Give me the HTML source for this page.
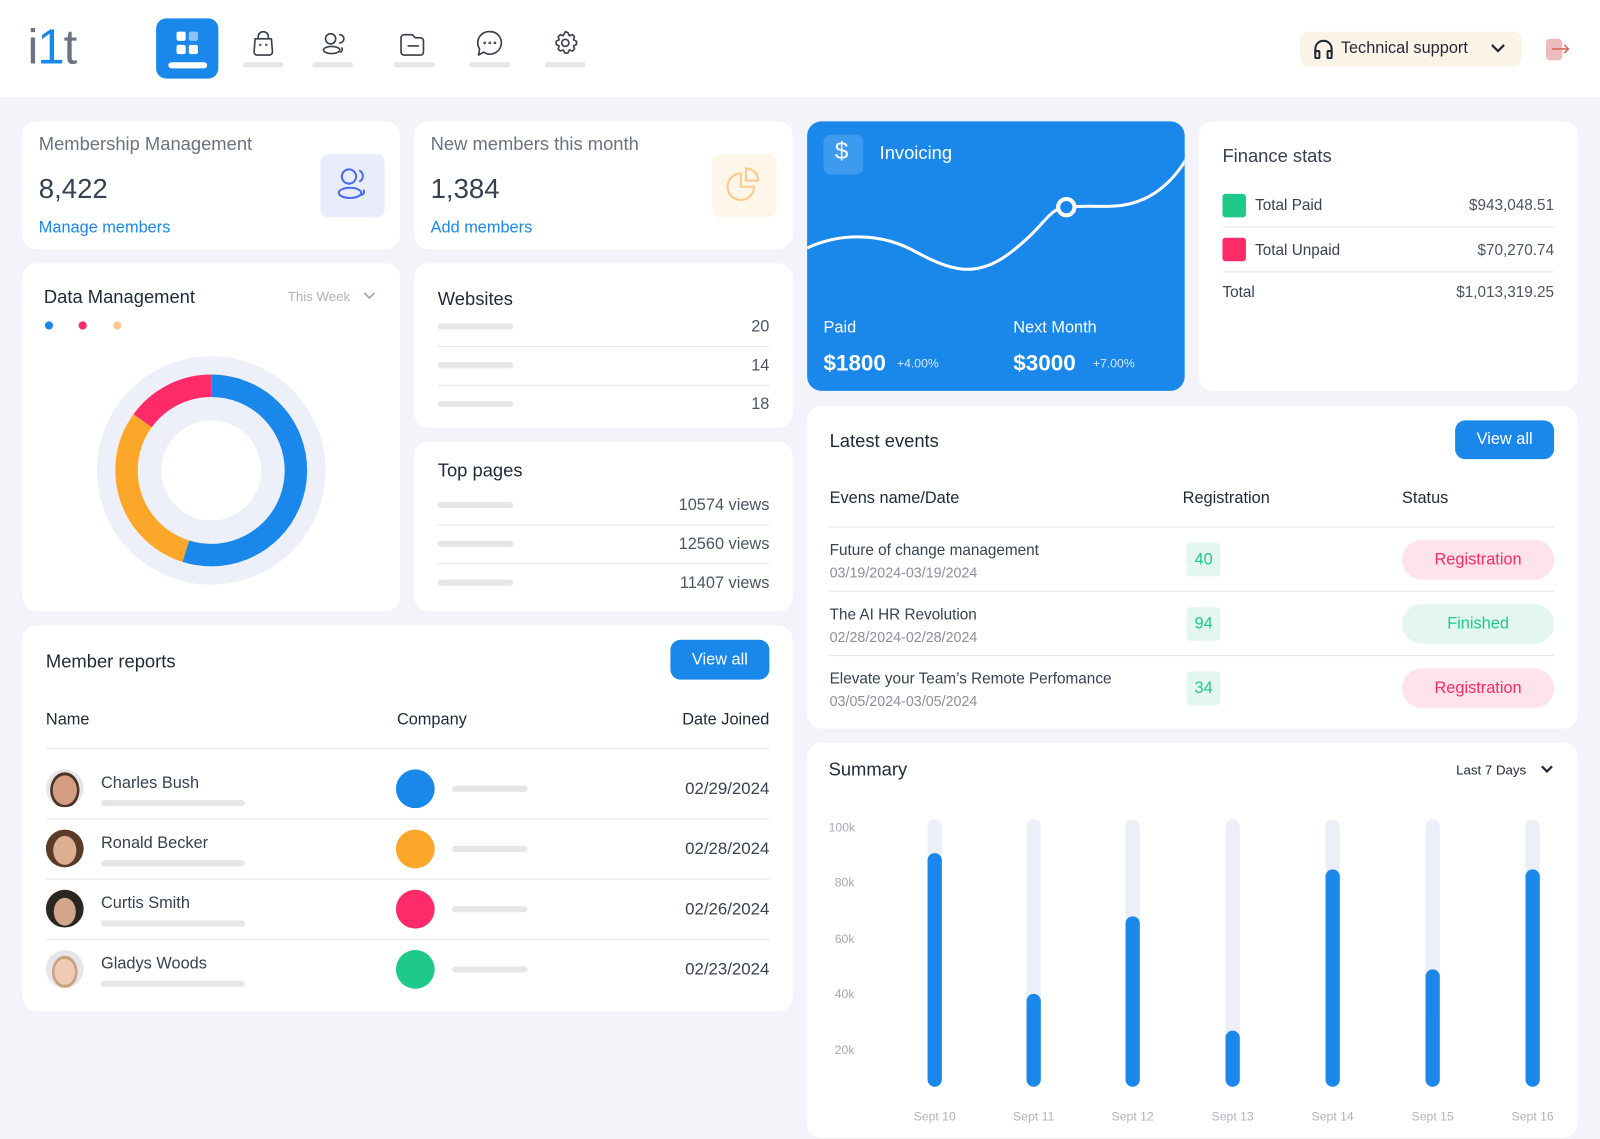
<!DOCTYPE html>
<html><head><meta charset="utf-8"><style>
*{box-sizing:border-box;margin:0;padding:0}
body{width:1600px;height:1138px;background:#f3f4f9;font-family:"Liberation Sans",sans-serif;color:#3a3f4a;position:relative;overflow:hidden}
#w{position:absolute;left:0;top:0;width:1568px;height:1116px;transform:scale(1.02041);transform-origin:0 0}
.a{position:absolute}
.card{position:absolute;background:#fff;border-radius:14px}
.t{position:absolute;white-space:nowrap}
.bar{position:absolute;height:6px;background:#e6e6e8;border-radius:3px}
.ln{position:absolute;height:1px;background:#e3e4ea}
.r{text-align:right}
</style></head><body><div id="w">
<!-- header -->
<div class="a" style="left:0;top:0;width:1568px;height:95px;background:#fff"></div>
<div class="t" style="left:27px;top:19px;font-size:48px;color:#6b7380;letter-spacing:-1px">i<span style="color:#1a87ea">1</span>t</div>
<div class="a" style="left:153px;top:18px;width:61px;height:59px;background:#1a87ea;border-radius:10px"></div>
<div class="a" style="left:173px;top:31px;width:9px;height:9px;background:#fff;border-radius:2px"></div>
<div class="a" style="left:185px;top:31px;width:9px;height:9px;background:#8ec3f5;border-radius:2px"></div>
<div class="a" style="left:173px;top:44px;width:9px;height:9px;background:#fff;border-radius:2px"></div>
<div class="a" style="left:185px;top:44px;width:9px;height:9px;background:#fff;border-radius:2px"></div>
<div class="a" style="left:165px;top:61px;width:38px;height:6px;background:#fff;border-radius:3px"></div>
<svg class="a" style="left:240px;top:28px" width="340" height="30" fill="none" stroke="#3a3f4a" stroke-width="1.6" stroke-linecap="round" stroke-linejoin="round">
<path d="M10 10h16l1 13a3 3 0 0 1-3 3H12a3 3 0 0 1-3-3z M13 10V8a5 5 0 0 1 10 0v2"/><circle cx="15" cy="16" r=".4"/><circle cx="21" cy="16" r=".4"/>
<circle cx="84" cy="10" r="5"/><ellipse cx="85" cy="21" rx="8" ry="3.5"/><path d="M93 6a4 4 0 0 1 0 8 M95 19a3 3 0 0 1-1 4"/>
<path d="M156 6h8l3 3h5a3 3 0 0 1 3 3v11a3 3 0 0 1-3 3h-16a3 3 0 0 1-3-3V9a3 3 0 0 1 3-3z M160 17h10"/>
<path d="M240 3a11 11 0 1 1-6 20l-5 3 1-6a11 11 0 0 1 10-17z"/><circle cx="235" cy="14" r=".5"/><circle cx="240" cy="14" r=".5"/><circle cx="245" cy="14" r=".5"/>
<circle cx="314" cy="14" r="3.5"/><path d="M314 3l2.5 1 1.5 3 3-1 2 2-1 3 3 1.5v3l-3 1.5 1 3-2 2-3-1-1.5 3h-3l-1.5-3-3 1-2-2 1-3-3-1.5v-3l3-1.5-1-3 2-2 3 1 1.5-3z"/>
</svg>
<div class="bar" style="left:238px;top:61px;width:40px;height:5px"></div>
<div class="bar" style="left:306px;top:61px;width:40px;height:5px"></div>
<div class="bar" style="left:386px;top:61px;width:40px;height:5px"></div>
<div class="bar" style="left:460px;top:61px;width:40px;height:5px"></div>
<div class="bar" style="left:534px;top:61px;width:40px;height:5px"></div>
<div class="a" style="left:1274px;top:31px;width:217px;height:34px;background:#fdf4e8;border-radius:8px"></div>
<svg class="a" style="left:1287px;top:38px" width="20" height="20" fill="none" stroke="#1f2937" stroke-width="2"><path d="M2 15V10a8 8 0 0 1 16 0v5"/><rect x="2" y="12" width="4" height="7" rx="1"/><rect x="14" y="12" width="4" height="7" rx="1"/></svg>
<div class="t" style="left:1314px;top:39px;font-size:16px;color:#1f2937">Technical support</div>
<svg class="a" style="left:1460px;top:41px" width="16" height="12" fill="none" stroke="#1f2937" stroke-width="2.2"><path d="M2 3l6 6 6-6"/></svg>
<div class="a" style="left:1515px;top:38px;width:16px;height:21px;background:#ecbcbd;border-radius:4px"></div>
<svg class="a" style="left:1520px;top:42px" width="20" height="12" fill="none" stroke="#d66a5b" stroke-width="1.6"><path d="M1 6h16M13 2l4 4-4 4"/></svg>

<!-- membership -->
<div class="card" style="left:22px;top:119px;width:370px;height:125px"></div>
<div class="t" style="left:38px;top:131px;font-size:18px;color:#6b7280">Membership Management</div>
<div class="t" style="left:38px;top:170px;font-size:27px;color:#374151">8,422</div>
<div class="t" style="left:38px;top:215px;font-size:16px;color:#1a87ea">Manage members</div>
<div class="a" style="left:314px;top:151px;width:63px;height:62px;background:#e8ecfd;border-radius:8px"></div>
<svg class="a" style="left:328px;top:163px" width="36" height="36" fill="none" stroke="#4a6ae8" stroke-width="2"><circle cx="14" cy="10" r="7"/><ellipse cx="15" cy="26" rx="11" ry="5"/><path d="M24 4a6 6 0 0 1 0 11 M28 23a3 3 0 0 1-2 5"/></svg>
<div class="card" style="left:406px;top:119px;width:371px;height:125px"></div>
<div class="t" style="left:422px;top:131px;font-size:18px;color:#6b7280">New members this month</div>
<div class="t" style="left:422px;top:170px;font-size:27px;color:#374151">1,384</div>
<div class="t" style="left:422px;top:215px;font-size:16px;color:#1a87ea">Add members</div>
<div class="a" style="left:698px;top:151px;width:63px;height:62px;background:#fff6ea;border-radius:8px"></div>
<svg class="a" style="left:710px;top:162px" width="40" height="40" fill="none" stroke="#fcc98a" stroke-width="2"><path d="M16 8a13 13 0 1 0 13 13H16z"/><path d="M21 3a12 12 0 0 1 12 12H21z"/></svg>

<!-- data management -->
<div class="card" style="left:22px;top:258px;width:370px;height:341px"></div>
<div class="t" style="left:43px;top:281px;font-size:18px;color:#1f2937">Data Management</div>
<div class="t" style="left:282px;top:283px;font-size:13px;color:#b0b3ba">This Week</div>
<svg class="a" style="left:356px;top:285px" width="12" height="10" fill="none" stroke="#9ca3af" stroke-width="1.6"><path d="M1 2l5 5 5-5"/></svg>
<div class="a" style="left:44px;top:315px;width:8px;height:8px;border-radius:50%;background:#1a87ea"></div>
<div class="a" style="left:77px;top:315px;width:8px;height:8px;border-radius:50%;background:#ff2a68"></div>
<div class="a" style="left:111px;top:315px;width:8px;height:8px;border-radius:50%;background:#fdc98b"></div>
<svg class="a" style="left:95px;top:349px" width="224" height="224">
<circle cx="112" cy="112" r="112" fill="#eef0f9"/><circle cx="112" cy="112" r="49" fill="#fff"/>
<g transform="rotate(-90 112 112)" fill="none" stroke-width="22">
<circle cx="112" cy="112" r="83" stroke="#1a87ea" stroke-dasharray="286 600"/>
<circle cx="112" cy="112" r="83" stroke="#fda72a" stroke-dasharray="0 286 157 600"/>
<circle cx="112" cy="112" r="83" stroke="#ff2a68" stroke-dasharray="0 443 79 600"/>
</g></svg>

<!-- websites -->
<div class="card" style="left:406px;top:258px;width:371px;height:161px"></div>
<div class="t" style="left:429px;top:283px;font-size:18px;color:#1f2937">Websites</div>
<div class="bar" style="left:429px;top:317px;width:74px"></div><div class="t r" style="left:654px;top:312px;width:100px;font-size:16px;color:#4b5563">20</div>
<div class="ln" style="left:429px;top:339px;width:325px"></div>
<div class="bar" style="left:429px;top:355px;width:74px"></div><div class="t r" style="left:654px;top:350px;width:100px;font-size:16px;color:#4b5563">14</div>
<div class="ln" style="left:429px;top:377px;width:325px"></div>
<div class="bar" style="left:429px;top:393px;width:74px"></div><div class="t r" style="left:654px;top:388px;width:100px;font-size:16px;color:#4b5563">18</div>

<!-- top pages -->
<div class="card" style="left:406px;top:433px;width:371px;height:166px"></div>
<div class="t" style="left:429px;top:451px;font-size:18px;color:#1f2937">Top pages</div>
<div class="bar" style="left:429px;top:492px;width:74px"></div><div class="t r" style="left:604px;top:487px;width:150px;font-size:16px;color:#4b5563">10574 views</div>
<div class="ln" style="left:429px;top:514px;width:325px"></div>
<div class="bar" style="left:429px;top:530px;width:74px"></div><div class="t r" style="left:604px;top:525px;width:150px;font-size:16px;color:#4b5563">12560 views</div>
<div class="ln" style="left:429px;top:552px;width:325px"></div>
<div class="bar" style="left:429px;top:568px;width:74px"></div><div class="t r" style="left:604px;top:563px;width:150px;font-size:16px;color:#4b5563">11407 views</div>

<!-- member reports -->
<div class="card" style="left:22px;top:613px;width:755px;height:378px"></div>
<div class="t" style="left:45px;top:638px;font-size:18px;color:#1f2937">Member reports</div>
<div class="a" style="left:657px;top:627px;width:97px;height:39px;background:#1a87ea;border-radius:10px;color:#fff;font-size:16px;text-align:center;line-height:39px">View all</div>
<div class="t" style="left:45px;top:697px;font-size:16px;color:#1f2937">Name</div>
<div class="t" style="left:389px;top:697px;font-size:16px;color:#1f2937">Company</div>
<div class="t r" style="left:604px;top:697px;width:150px;font-size:16px;color:#1f2937">Date Joined</div>
<div class="ln" style="left:45px;top:733px;width:709px"></div>

<div class="a" style="left:45px;top:754px;width:37px;height:37px;border-radius:50%;background:radial-gradient(ellipse 45% 55% at 50% 55%,#d49c80 0 70%,#4a3328 72%,#4a3328 85%,#e6e6ea 87%)"></div>
<div class="t" style="left:99px;top:759px;font-size:16px;color:#374151">Charles Bush</div>
<div class="bar" style="left:99px;top:784px;width:141px"></div>
<div class="a" style="left:388px;top:754px;width:38px;height:38px;border-radius:50%;background:#1a87ea"></div>
<div class="bar" style="left:443px;top:770px;width:74px"></div>
<div class="t r" style="left:604px;top:764px;width:150px;font-size:16.5px;color:#374151">02/29/2024</div>
<div class="ln" style="left:45px;top:802px;width:709px"></div>

<div class="a" style="left:45px;top:813px;width:37px;height:37px;border-radius:50%;background:radial-gradient(ellipse 40% 50% at 50% 55%,#dcae92 0 75%,#5a3a28 78%)"></div>
<div class="t" style="left:99px;top:818px;font-size:16px;color:#374151">Ronald Becker</div>
<div class="bar" style="left:99px;top:843px;width:141px"></div>
<div class="a" style="left:388px;top:813px;width:38px;height:38px;border-radius:50%;background:#fda72a"></div>
<div class="bar" style="left:443px;top:829px;width:74px"></div>
<div class="t r" style="left:604px;top:823px;width:150px;font-size:16.5px;color:#374151">02/28/2024</div>
<div class="ln" style="left:45px;top:861px;width:709px"></div>

<div class="a" style="left:45px;top:872px;width:37px;height:37px;border-radius:50%;background:radial-gradient(ellipse 38% 48% at 50% 58%,#d3a68c 0 75%,#2b2622 78%)"></div>
<div class="t" style="left:99px;top:877px;font-size:16px;color:#374151">Curtis Smith</div>
<div class="bar" style="left:99px;top:902px;width:141px"></div>
<div class="a" style="left:388px;top:872px;width:38px;height:38px;border-radius:50%;background:#ff2a68"></div>
<div class="bar" style="left:443px;top:888px;width:74px"></div>
<div class="t r" style="left:604px;top:882px;width:150px;font-size:16.5px;color:#374151">02/26/2024</div>
<div class="ln" style="left:45px;top:920px;width:709px"></div>

<div class="a" style="left:45px;top:931px;width:37px;height:37px;border-radius:50%;background:radial-gradient(ellipse 38% 48% at 50% 58%,#efcab5 0 70%,#c9a27c 73% 88%,#e6e6ea 90%)"></div>
<div class="t" style="left:99px;top:936px;font-size:16px;color:#374151">Gladys Woods</div>
<div class="bar" style="left:99px;top:961px;width:141px"></div>
<div class="a" style="left:388px;top:931px;width:38px;height:38px;border-radius:50%;background:#1ec98a"></div>
<div class="bar" style="left:443px;top:947px;width:74px"></div>
<div class="t r" style="left:604px;top:941px;width:150px;font-size:16.5px;color:#374151">02/23/2024</div>

<!-- invoicing -->
<div class="card" style="left:791px;top:119px;width:370px;height:264px;background:#1a87ea;overflow:hidden">
<div class="a" style="left:16px;top:13px;width:39px;height:39px;background:#3d9bef;border-radius:7px"></div>
<div class="t" style="left:27px;top:16px;font-size:24px;color:#fff;font-weight:300">$</div>
<div class="t" style="left:71px;top:21px;font-size:18px;color:#fff">Invoicing</div>
<svg class="a" style="left:0;top:0" width="370" height="264" fill="none"><path d="M0 124 C30 110 70 108 105 127 S165 155 200 128 S235 86 254 84 C275 82 285 84 300 83 C330 82 355 65 372 36" stroke="#fff" stroke-width="3"/><circle cx="254" cy="84" r="8" fill="#1a87ea" stroke="#fff" stroke-width="4"/></svg>
<div class="t" style="left:16px;top:194px;font-size:16px;color:#fff">Paid</div>
<div class="t" style="left:16px;top:224px;font-size:22px;color:#fff;font-weight:bold">$1800</div>
<div class="t" style="left:88px;top:230px;font-size:12px;color:#d5e8fb">+4.00%</div>
<div class="t" style="left:202px;top:194px;font-size:16px;color:#fff">Next Month</div>
<div class="t" style="left:202px;top:224px;font-size:22px;color:#fff;font-weight:bold">$3000</div>
<div class="t" style="left:280px;top:230px;font-size:12px;color:#d5e8fb">+7.00%</div>
</div>

<!-- finance -->
<div class="card" style="left:1175px;top:119px;width:371px;height:264px"></div>
<div class="t" style="left:1198px;top:143px;font-size:18px;color:#374151">Finance stats</div>
<div class="a" style="left:1198px;top:190px;width:23px;height:23px;background:#1ec98a;border-radius:3px"></div>
<div class="t" style="left:1230px;top:193px;font-size:15px;color:#374151">Total Paid</div>
<div class="t r" style="left:1373px;top:193px;width:150px;font-size:15px;color:#4b5563">$943,048.51</div>
<div class="ln" style="left:1198px;top:222px;width:325px"></div>
<div class="a" style="left:1198px;top:233px;width:23px;height:23px;background:#ff2a68;border-radius:3px"></div>
<div class="t" style="left:1230px;top:237px;font-size:15px;color:#374151">Total Unpaid</div>
<div class="t r" style="left:1373px;top:237px;width:150px;font-size:15px;color:#4b5563">$70,270.74</div>
<div class="ln" style="left:1198px;top:266px;width:325px"></div>
<div class="t" style="left:1198px;top:278px;font-size:15px;color:#374151">Total</div>
<div class="t r" style="left:1373px;top:278px;width:150px;font-size:15px;color:#4b5563">$1,013,319.25</div>

<!-- events -->
<div class="card" style="left:791px;top:398px;width:755px;height:316px"></div>
<div class="t" style="left:813px;top:422px;font-size:18px;color:#1f2937">Latest events</div>
<div class="a" style="left:1426px;top:412px;width:97px;height:38px;background:#1a87ea;border-radius:10px;color:#fff;font-size:16px;text-align:center;line-height:38px">View all</div>
<div class="t" style="left:813px;top:480px;font-size:16px;color:#1f2937">Evens name/Date</div>
<div class="t" style="left:1159px;top:480px;font-size:16px;color:#1f2937">Registration</div>
<div class="t" style="left:1374px;top:480px;font-size:16px;color:#1f2937">Status</div>
<div class="ln" style="left:813px;top:516px;width:710px"></div>

<div class="t" style="left:813px;top:531px;font-size:15px;color:#374151">Future of change management</div>
<div class="t" style="left:813px;top:553px;font-size:14px;color:#8a8f98">03/19/2024-03/19/2024</div>
<div class="a" style="left:1163px;top:532px;width:33px;height:33px;background:#e3f7ef;border-radius:4px;color:#1ec98a;font-size:16px;text-align:center;line-height:33px">40</div>
<div class="a" style="left:1374px;top:529px;width:149px;height:39px;background:#ffe3ea;border-radius:20px;color:#ff2a68;font-size:16px;text-align:center;line-height:39px">Registration</div>
<div class="ln" style="left:813px;top:579px;width:710px"></div>

<div class="t" style="left:813px;top:594px;font-size:15px;color:#374151">The AI HR Revolution</div>
<div class="t" style="left:813px;top:616px;font-size:14px;color:#8a8f98">02/28/2024-02/28/2024</div>
<div class="a" style="left:1163px;top:595px;width:33px;height:33px;background:#e3f7ef;border-radius:4px;color:#1ec98a;font-size:16px;text-align:center;line-height:33px">94</div>
<div class="a" style="left:1374px;top:592px;width:149px;height:39px;background:#e3f7ef;border-radius:20px;color:#1ec98a;font-size:16px;text-align:center;line-height:39px">Finished</div>
<div class="ln" style="left:813px;top:642px;width:710px"></div>

<div class="t" style="left:813px;top:657px;font-size:15px;color:#374151">Elevate your Team’s Remote Perfomance</div>
<div class="t" style="left:813px;top:679px;font-size:14px;color:#8a8f98">03/05/2024-03/05/2024</div>
<div class="a" style="left:1163px;top:658px;width:33px;height:33px;background:#e3f7ef;border-radius:4px;color:#1ec98a;font-size:16px;text-align:center;line-height:33px">34</div>
<div class="a" style="left:1374px;top:655px;width:149px;height:39px;background:#ffe3ea;border-radius:20px;color:#ff2a68;font-size:16px;text-align:center;line-height:39px">Registration</div>

<!-- summary -->
<div class="card" style="left:791px;top:728px;width:755px;height:387px"></div>
<div class="t" style="left:812px;top:744px;font-size:18px;color:#1f2937">Summary</div>
<div class="t" style="left:1427px;top:747px;font-size:13px;color:#1f2937">Last 7 Days</div>
<svg class="a" style="left:1509px;top:749px" width="14" height="10" fill="none" stroke="#1f2937" stroke-width="2.2"><path d="M2 2l5 5 5-5"/></svg>
<div class="t" style="left:812px;top:804px;font-size:12px;color:#a5a9b1">100k</div>
<div class="t" style="left:818px;top:858px;font-size:12px;color:#a5a9b1">80k</div>
<div class="t" style="left:818px;top:913px;font-size:12px;color:#a5a9b1">60k</div>
<div class="t" style="left:818px;top:967px;font-size:12px;color:#a5a9b1">40k</div>
<div class="t" style="left:818px;top:1022px;font-size:12px;color:#a5a9b1">20k</div>
<svg class="a" style="left:880px;top:800px" width="660" height="310">
<g stroke-linecap="round" stroke-width="14">
<g stroke="#edeff8"><path d="M36 10V258M133 10V258M230 10V258M328 10V258M426 10V258M524 10V258M622 10V258"/></g>
<g stroke="#1a87ea"><path d="M36 43V258M133 181V258M230 105V258M328 217V258M426 59V258M524 157V258M622 59V258"/></g>
</g>
<g font-family="Liberation Sans,sans-serif" font-size="12" fill="#b0b3ba" text-anchor="middle">
<text x="36" y="298">Sept 10</text><text x="133" y="298">Sept 11</text><text x="230" y="298">Sept 12</text><text x="328" y="298">Sept 13</text><text x="426" y="298">Sept 14</text><text x="524" y="298">Sept 15</text><text x="622" y="298">Sept 16</text>
</g></svg>
</div></body></html>
